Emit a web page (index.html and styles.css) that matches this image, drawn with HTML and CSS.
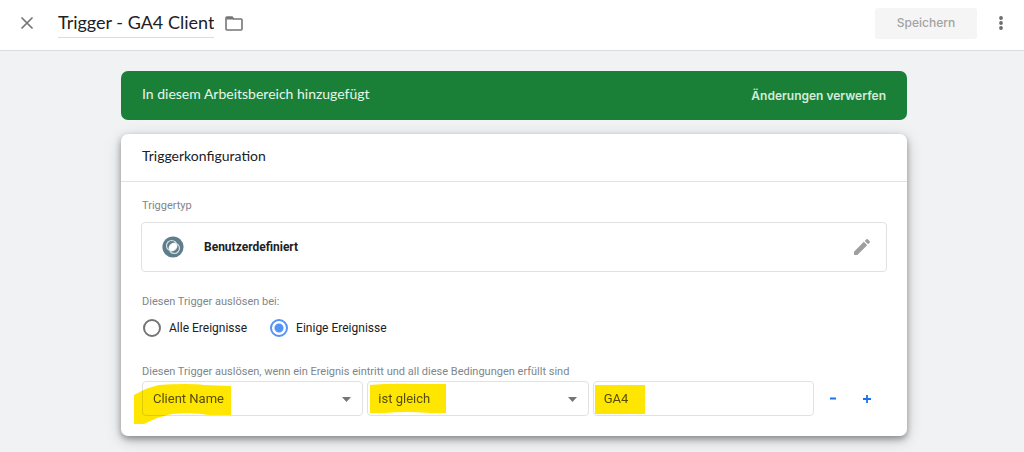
FILE: index.html
```
<!DOCTYPE html>
<html lang="de">
<head>
<meta charset="utf-8">
<title>Trigger - GA4 Client</title>
<link rel="stylesheet" href="styles.css">
</head>
<body>
<header class="topbar">
  <button class="icon-button close" type="button" aria-label="Schließen">
    <svg width="14" height="14" viewBox="0 0 14 14"><path d="M1.5 1.5l11 11M12.5 1.5l-11 11" fill="none" stroke="#757575" stroke-width="1.7"/></svg>
  </button>
  <input class="title" type="text" value="Trigger - GA4 Client" aria-label="Name des Triggers">
  <button class="icon-button folder" type="button" aria-label="Ordner">
    <svg width="18" height="15" viewBox="0 0 18 15"><path d="M2 1h5l1.7 2H16a1 1 0 0 1 1 1v9a1 1 0 0 1-1 1H2a1 1 0 0 1-1-1V2a1 1 0 0 1 1-1z" fill="none" stroke="#757575" stroke-width="1.6"/><path d="M1.5 1h5.3l2 2.6H1.5z" fill="#757575"/></svg>
  </button>
  <button class="save" type="button" disabled>Speichern</button>
  <button class="icon-button more" type="button" aria-label="Weitere Aktionen">
    <svg width="4" height="14" viewBox="0 0 4 14" fill="#6a6d70"><circle cx="2" cy="2" r="1.9"/><circle cx="2" cy="7" r="1.9"/><circle cx="2" cy="12" r="1.9"/></svg>
  </button>
</header>
<main class="content">
  <section class="banner">
    <p class="banner-text">In diesem Arbeitsbereich hinzugefügt</p>
    <button class="discard" type="button">Änderungen verwerfen</button>
  </section>
  <section class="card">
    <h2 class="card-title">Triggerkonfiguration</h2>
    <div class="card-body">
      <p class="label">Triggertyp</p>
      <div class="type-box">
        <svg width="22" height="22" viewBox="0 0 22 22">
          <circle cx="11" cy="11" r="10.6" fill="#607d8b"/>
          <circle cx="9.7" cy="9.7" r="5.2" fill="none" stroke="#d5e0e4" stroke-width="1.2"/>
          <circle cx="12.3" cy="12.3" r="5.2" fill="none" stroke="#d5e0e4" stroke-width="1.2"/>
          <ellipse cx="11" cy="11" rx="4.3" ry="3.2" transform="rotate(-45 11 11)" fill="#fff"/>
        </svg>
        <span class="type-name">Benutzerdefiniert</span>
        <button class="icon-button" type="button" aria-label="Bearbeiten">
          <svg width="16" height="16" viewBox="3 3 18 18" fill="#9e9e9e"><path d="M3 17.25V21h3.75L17.81 9.94l-3.75-3.75L3 17.25zM20.71 7.04a1 1 0 0 0 0-1.41l-2.34-2.34a1 1 0 0 0-1.41 0l-1.83 1.83 3.75 3.75 1.83-1.83z"/></svg>
        </button>
      </div>
      <fieldset class="group">
        <legend class="label">Diesen Trigger auslösen bei:</legend>
        <div class="radios">
          <label class="choice"><input class="radio" type="radio" name="fire">Alle Ereignisse</label>
          <label class="choice"><input class="radio" type="radio" name="fire" checked>Einige Ereignisse</label>
        </div>
      </fieldset>
      <fieldset class="group">
        <legend class="label">Diesen Trigger auslösen, wenn ein Ereignis eintritt und all diese Bedingungen erfüllt sind</legend>
        <div class="condition">
          <div class="cell">
            <select class="field select" aria-label="Variable"><option>Client Name</option></select>
            <svg class="arrow" width="10" height="5" viewBox="0 0 10 5"><path d="M0 0h9L4.500 5z" fill="#757575"/></svg>
            <svg class="marker marker-name" width="98" height="42" viewBox="0 0 98 42"><path d="M0 12Q14 4 25 2Q55 0 70 2L97 3V32H75Q58 29 38 31Q26 33 10 41H0z" fill="#ffe600"/></svg>
          </div>
          <div class="cell">
            <select class="field select" aria-label="Operator"><option>ist gleich</option></select>
            <svg class="arrow" width="10" height="5" viewBox="0 0 10 5"><path d="M0 0h9L4.500 5z" fill="#757575"/></svg>
            <svg class="marker marker-operator" width="77" height="31" viewBox="0 0 77 31"><path d="M0 2Q20 0 48 1L76 1V30H60Q35 28 15 30L0 30z" fill="#ffe600"/></svg>
          </div>
          <div class="cell">
            <input class="field" type="text" value="GA4" aria-label="Wert">
            <svg class="marker marker-value" width="50" height="29" viewBox="0 0 50 29"><path d="M0 0H50V29H0z" fill="#ffe600"/></svg>
          </div>
          <div class="row-actions">
            <button class="icon-button" type="button" aria-label="Bedingung entfernen"><svg width="8" height="8" viewBox="0 0 8 8"><path d="M1 3.500h6" stroke="#1a73e8" stroke-width="2"/></svg></button>
            <button class="icon-button" type="button" aria-label="Bedingung hinzufügen"><svg width="8" height="8" viewBox="0 0 8 8"><path d="M0 4h8M4 0v8" stroke="#1a73e8" stroke-width="1.800"/></svg></button>
          </div>
        </div>
      </fieldset>
    </div>
  </section>
</main>
</body>
</html>
```
FILE: styles.css
```
* { box-sizing: border-box; }
body {
  margin: 0;
  background: #f1f2f4;
  color: #202124;
  font: 12px/16px Roboto, sans-serif;
}
button, input, select { font: inherit; color: inherit; }
p, h2 { margin: 0; }
svg { display: block; flex: none; }

.topbar {
  display: flex;
  align-items: center;
  padding: 0 21px 4px 20px;
  background: #fff;
  border-bottom: 1px solid #dadce0;
  height: 51px;
}
.icon-button {
  display: flex;
  align-items: center;
  justify-content: center;
  padding: 0;
  border: 0;
  background: none;
}
.close { width: 14px; height: 32px; margin-right: 24px; }
.folder { margin-left: 11px; }
.more { margin-left: 22px; }
.title {
  field-sizing: content;
  padding: 0 0 2px;
  border: 0;
  border-bottom: 1px solid #dadce0;
  background: none;
  font: 18px/26px Lato, sans-serif;
}
.save {
  margin-left: auto;
  width: 102px;
  height: 31px;
  border: 0;
  border-radius: 3px;
  background: #f5f5f5;
  color: #a3a3a3;
  font: 500 12px/20px Inter, sans-serif;
}

.content { padding: 20px 117px 16px 121px; }
.banner {
  display: flex;
  align-items: center;
  justify-content: space-between;
  min-height: 49px;
  padding: 0 21px;
  border-radius: 7px;
  background: #1a8038;
  color: #e9f5eb;
}
.banner-text { padding-bottom: 3px; font: 14px/20px Lato, sans-serif; }
.discard {
  padding: 0;
  border: 0;
  background: none;
  color: #d6ebda;
  font: 600 12px/20px Inter, sans-serif;
}

.card {
  margin-top: 14px;
  border-radius: 7px;
  background: #fff;
  box-shadow: 0 3px 6px rgba(0, 0, 0, .35), 0 4px 16px rgba(0, 0, 0, .18);
}
.card-title {
  padding: 12px 21px 15px;
  border-bottom: 1px solid #dfe1e3;
  font: 14px/20px Lato, sans-serif;
}
.card-body { padding: 16px 20px 20px; }
.label {
  padding: 0 1px;
  color: #80868b;
  font-size: 11px;
}
.type-box {
  display: flex;
  align-items: center;
  height: 50px;
  margin-top: 8px;
  padding: 0 16px 0 20px;
  border: 1px solid #dfe1e3;
  border-radius: 4px;
}
.type-name {
  flex: 1;
  margin-left: 20px;
  font-weight: 700;
}
.group {
  min-width: 0;
  margin: 22px 0 0;
  padding: 0;
  border: 0;
}
.radios { display: flex; gap: 23px; padding: 9px 0 5px 2px; }
.choice { display: flex; align-items: center; gap: 8px; }
.radio {
  appearance: none;
  width: 18px;
  height: 18px;
  margin: 0;
  border: 2px solid #757575;
  border-radius: 50%;
}
.radio:checked {
  border-color: #5594f7;
  background: radial-gradient(circle, #5594f7 4px, transparent 5px);
}

.condition {
  display: grid;
  grid-template-columns: repeat(3, minmax(0, 1fr)) 69px;
  gap: 4px;
  margin-top: 1px;
  padding-left: 1px;
}
.cell { position: relative; isolation: isolate; }
.field {
  display: block;
  width: 100%;
  height: 35px;
  padding: 0 10px;
  border: 1px solid #dfe1e3;
  border-radius: 4px;
  background: #fff;
  color: #555;
  font-size: 13px;
}
.select { appearance: none; }
.arrow { position: absolute; right: 11px; top: 16px; pointer-events: none; }
.marker { position: absolute; mix-blend-mode: multiply; pointer-events: none; }
.marker-name { left: -8px; top: 2px; }
.marker-operator { left: 3px; top: 2px; }
.marker-value { left: 2px; top: 4px; }
.row-actions {
  display: flex;
  align-items: center;
  gap: 26px;
  padding-left: 11px;
}
```
